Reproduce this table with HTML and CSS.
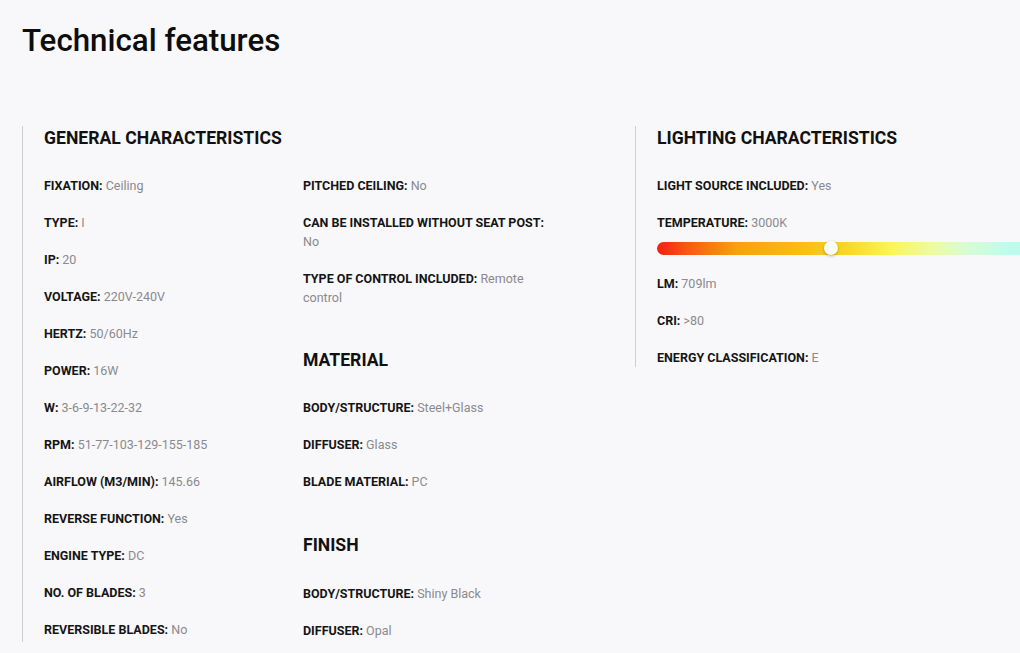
FILE: index.html
```html
<!DOCTYPE html>
<html lang="en">
<head>
<meta charset="utf-8">
<title>Technical features</title>
<link rel="stylesheet" href="styles.css">
</head>
<body>
<div class="page">
  <h1 class="title">Technical features</h1>
  <div class="sections">
    <section class="section section-general">
      <h2 class="heading">GENERAL CHARACTERISTICS</h2>
      <div class="cols">
        <div class="col">
          <p class="row"><b>FIXATION:</b> <span class="val">Ceiling</span></p>
          <p class="row"><b>TYPE:</b> <span class="val">I</span></p>
          <p class="row"><b>IP:</b> <span class="val">20</span></p>
          <p class="row"><b>VOLTAGE:</b> <span class="val">220V-240V</span></p>
          <p class="row"><b>HERTZ:</b> <span class="val">50/60Hz</span></p>
          <p class="row"><b>POWER:</b> <span class="val">16W</span></p>
          <p class="row"><b>W:</b> <span class="val">3-6-9-13-22-32</span></p>
          <p class="row"><b>RPM:</b> <span class="val">51-77-103-129-155-185</span></p>
          <p class="row"><b>AIRFLOW (M3/MIN):</b> <span class="val">145.66</span></p>
          <p class="row"><b>REVERSE FUNCTION:</b> <span class="val">Yes</span></p>
          <p class="row"><b>ENGINE TYPE:</b> <span class="val">DC</span></p>
          <p class="row"><b>NO. OF BLADES:</b> <span class="val">3</span></p>
          <p class="row last"><b>REVERSIBLE BLADES:</b> <span class="val">No</span></p>
        </div>
        <div class="col">
          <p class="row"><b>PITCHED CEILING:</b> <span class="val">No</span></p>
          <p class="row"><b>CAN BE INSTALLED WITHOUT SEAT POST:</b> <span class="val">No</span></p>
          <p class="row"><b>TYPE OF CONTROL INCLUDED:</b> <span class="val">Remote control</span></p>
          <h2 class="heading sub">MATERIAL</h2>
          <p class="row"><b>BODY/STRUCTURE:</b> <span class="val">Steel+Glass</span></p>
          <p class="row"><b>DIFFUSER:</b> <span class="val">Glass</span></p>
          <p class="row"><b>BLADE MATERIAL:</b> <span class="val">PC</span></p>
          <h2 class="heading sub">FINISH</h2>
          <p class="row"><b>BODY/STRUCTURE:</b> <span class="val">Shiny Black</span></p>
          <p class="row last"><b>DIFFUSER:</b> <span class="val">Opal</span></p>
        </div>
      </div>
    </section>
    <section class="section section-light">
      <h2 class="heading">LIGHTING CHARACTERISTICS</h2>
      <p class="row"><b>LIGHT SOURCE INCLUDED:</b> <span class="val">Yes</span></p>
      <div class="row temp">
        <p class="temp-label"><b>TEMPERATURE:</b> <span class="val">3000K</span></p>
        <div class="temp-bar"><span class="knob"></span></div>
      </div>
      <p class="row"><b>LM:</b> <span class="val">709lm</span></p>
      <p class="row"><b>CRI:</b> <span class="val">&gt;80</span></p>
      <p class="row last"><b>ENERGY CLASSIFICATION:</b> <span class="val">E</span></p>
    </section>
  </div>
</div>
</body>
</html>
```
FILE: styles.css
```css
* { box-sizing: border-box; }
html, body {
  margin: 0;
  padding: 0;
  background: #f8f8fa;
  overflow: hidden;
}
body {
  font-family: Roboto, "Liberation Sans", Arial, sans-serif;
  color: #111;
}
.page {
  padding: 0 0 0 22px;
  width: 1400px;
}
.title {
  margin: 23px 0 67px;
  font-size: 31.3px;
  line-height: 36px;
  font-weight: 500;
  color: #0d0d0d;
}
.sections {
  display: flex;
  align-items: flex-start;
}
.section {
  border-left: 1px solid #cfcfd2;
  padding: 0 0 0 21px;
}
.section-general {
  width: 613px;
  padding-bottom: 2px;
}
.section-light {
  width: 620px;
}
.heading {
  margin: 0 0 26px;
  font-size: 17.6px;
  line-height: 24px;
  font-weight: 700;
  color: #111;
}
.heading.sub {
  margin-top: 41px;
  margin-bottom: 26px;
}
.heading.sub + .row + .row + .row + .heading.sub {
  margin-top: 42px;
  margin-bottom: 27px;
}
.cols {
  display: grid;
  grid-template-columns: 250px 250px;
  column-gap: 9px;
}
.row {
  margin: 0 0 18px;
  font-size: 12.5px;
  line-height: 19px;
}
.row.last { margin-bottom: 0; }
.row b {
  font-weight: 700;
  color: #151515;
}
.val {
  color: #8a8a8e;
}
.temp-label {
  margin: 0;
}
.temp {
  margin-bottom: 19px;
}
.temp-bar {
  position: relative;
  margin-top: 10px;
  width: 600px;
  height: 13px;
  border-radius: 7px;
  background: linear-gradient(90deg,
    #f3200f 0px,
    #f65a10 30px,
    #f8a010 80px,
    #fbbf14 150px,
    #fbd628 190px,
    #fbf55a 235px,
    #eefba0 275px,
    #d8fcd4 310px,
    #befcec 350px,
    #b2f8f4 420px,
    #b0e6ff 600px);
}
.knob {
  position: absolute;
  left: 167px;
  top: -1px;
  width: 14px;
  height: 14px;
  border-radius: 50%;
  background: #fff;
  box-shadow: 0 1px 3px rgba(0,0,0,0.3);
}
```
